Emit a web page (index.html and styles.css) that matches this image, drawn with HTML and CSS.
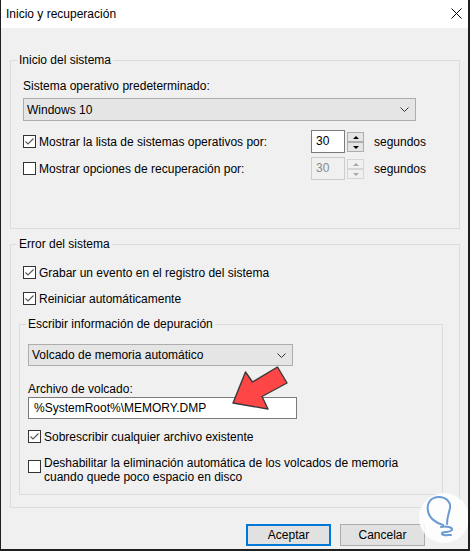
FILE: index.html
```html
<!DOCTYPE html>
<html lang="es">
<head>
<meta charset="utf-8">
<title>Inicio y recuperación</title>
<link rel="stylesheet" href="styles.css">
</head>
<body>
<div class="window">
  <div class="titlebar">
    <span class="title">Inicio y recuperación</span>
    <svg class="close" width="11" height="11" viewBox="0 0 11 11"><path d="M0.5 0.5L10.5 10.5M10.5 0.5L0.5 10.5" stroke="#000" stroke-width="1" fill="none"/></svg>
  </div>
  <div class="content">
    <fieldset class="group g1">
      <legend class="lg-outer">Inicio del sistema</legend>
      <div class="label">Sistema operativo predeterminado:</div>
      <div class="combo combo-os"><span>Windows 10</span><svg class="chev" width="9" height="5" viewBox="0 0 9 5"><path d="M0.5 0.5L4.5 4.5L8.5 0.5" stroke="#333" fill="none"/></svg></div>
      <div class="row row-first">
        <div class="check-label"><span class="cb"><svg width="11" height="11" viewBox="0 0 11 11"><path d="M1.5 5.5L4 8L9.5 2.5" fill="none" stroke="#555" stroke-width="1.1"/></svg></span><span>Mostrar la lista de sistemas operativos por:</span></div>
        <div class="spinner">
          <div class="spin-text">30</div>
          <div class="spin-btns"><span class="spin-btn up"></span><span class="spin-btn down"></span></div>
        </div>
        <span class="unit">segundos</span>
      </div>
      <div class="row row-second">
        <div class="check-label"><span class="cb"></span><span>Mostrar opciones de recuperación por:</span></div>
        <div class="spinner disabled">
          <div class="spin-text">30</div>
          <div class="spin-btns"><span class="spin-btn up"></span><span class="spin-btn down"></span></div>
        </div>
        <span class="unit">segundos</span>
      </div>
    </fieldset>

    <fieldset class="group g2">
      <legend class="lg-outer">Error del sistema</legend>
      <div class="crow crow-first"><span class="cb"><svg width="11" height="11" viewBox="0 0 11 11"><path d="M1.5 5.5L4 8L9.5 2.5" fill="none" stroke="#555" stroke-width="1.1"/></svg></span><span>Grabar un evento en el registro del sistema</span></div>
      <div class="crow crow-next"><span class="cb"><svg width="11" height="11" viewBox="0 0 11 11"><path d="M1.5 5.5L4 8L9.5 2.5" fill="none" stroke="#555" stroke-width="1.1"/></svg></span><span>Reiniciar automáticamente</span></div>

      <fieldset class="group inner">
        <legend class="lg-inner">Escribir información de depuración</legend>
        <div class="combo combo-dump"><span>Volcado de memoria automático</span><svg class="chev" width="9" height="5" viewBox="0 0 9 5"><path d="M0.5 0.5L4.5 4.5L8.5 0.5" stroke="#333" fill="none"/></svg></div>
        <div class="label label-file">Archivo de volcado:</div>
        <div class="textbox">%SystemRoot%\MEMORY.DMP</div>
        <div class="crow crow-over"><span class="cb"><svg width="11" height="11" viewBox="0 0 11 11"><path d="M1.5 5.5L4 8L9.5 2.5" fill="none" stroke="#555" stroke-width="1.1"/></svg></span><span>Sobrescribir cualquier archivo existente</span></div>
        <div class="crow-multi"><span class="cb cb-top"></span><span class="multi-text">Deshabilitar la eliminación automática de los volcados de memoria<br>cuando quede poco espacio en disco</span></div>
      </fieldset>
    </fieldset>

    <div class="buttons">
      <button class="btn btn-default" type="button">Aceptar</button>
      <button class="btn" type="button">Cancelar</button>
    </div>
  </div>

  <svg class="overlay" width="470" height="551" viewBox="0 0 470 551">
    <polygon points="233,403 245.5,372 252.5,382 277.5,367 287,383 262,396.5 268,409" fill="#ff4646" stroke="#3a3a3a" stroke-width="1.4" stroke-linejoin="round"/>
    <circle cx="444" cy="518" r="25" fill="#ffffff" fill-opacity="0.85"/>
    <path d="M443 525 C436 523 429 518 428 511 C426 502 432 497 439 497 C446 497 451 502 450 508 C449 513 447 517 447 524 M441 527 C446 526 453 527 452 530 C450 533 441 531 442 534 C443 536 448 535 451 535" fill="none" stroke="#6b9bd2" stroke-width="2" stroke-linecap="round"/>
  </svg>
</div>
</body>
</html>
```

FILE: styles.css
```css
html, body {
  margin: 0;
  padding: 0;
  background: #f0f0f0;
}

.window {
  position: relative;
  width: 470px;
  height: 551px;
  box-sizing: border-box;
  border-left: 1px solid #1f1f1f;
  border-right: 2px solid #1f1f1f;
  border-bottom: 2px solid #1f1f1f;
  background: #f0f0f0;
  font: 12px "Liberation Sans", Arial, sans-serif;
  color: #000;
  overflow: hidden;
}

.titlebar {
  height: 28px;
  background: #fff;
  display: flex;
  align-items: center;
  justify-content: space-between;
  padding: 0 6px 0 5px;
  box-sizing: border-box;
}

.close {
  display: block;
  margin-top: -1px;
}

.content {
  padding: 24px 8px 0 9px;
}

.group {
  margin: 0;
  border: 1px solid #dcdcdc;
  min-width: 0;
}

.group legend {
  padding: 0 2px;
  line-height: 16px;
}

.lg-outer {
  margin-left: -6px;
}

.lg-inner {
  margin-left: -2px;
}

.g1 {
  padding: 10px 8px 48px 12px;
}

.g2 {
  margin-top: 7px;
  padding: 12px 8px 12px 12px;
}

.inner {
  width: 424px;
  box-sizing: border-box;
  margin: 9px 0 0 -4px;
  padding: 12px 8px 10px 8px;
}

.label {
  line-height: 16px;
}

.combo {
  display: flex;
  align-items: center;
  justify-content: space-between;
  box-sizing: border-box;
  border: 1px solid #adadad;
  background: #e5e5e5;
  padding: 0 6px 0 3px;
}

.combo-os {
  margin-top: 4px;
  width: 393px;
  height: 23px;
}

.combo-dump {
  width: 265px;
  height: 22px;
}

.chev {
  display: block;
}

.row {
  display: flex;
  align-items: center;
  height: 23px;
}

.row-first {
  margin-top: 9px;
}

.row-second {
  margin-top: 4px;
}

.check-label {
  width: 288px;
  display: flex;
  align-items: center;
  gap: 3px;
}

.cb {
  flex: none;
  width: 13px;
  height: 13px;
  box-sizing: border-box;
  border: 1px solid #333;
  background: #fff;
  display: flex;
}

.cb svg {
  display: block;
}

.spinner {
  display: flex;
  align-items: flex-start;
  gap: 2px;
  height: 23px;
}

.spin-text {
  width: 34px;
  height: 23px;
  box-sizing: border-box;
  border: 1px solid #7a7a7a;
  background: #fff;
  padding-left: 4px;
  line-height: 21px;
}

.spin-btns {
  display: flex;
  flex-direction: column;
  margin-top: 2px;
}

.spin-btn {
  width: 17px;
  height: 10px;
  box-sizing: border-box;
  border: 1px solid #adadad;
  background: #e5e5e5;
  display: flex;
  align-items: center;
  justify-content: center;
}

.spin-btn.up::after {
  content: "";
  border-left: 3px solid transparent;
  border-right: 3px solid transparent;
  border-bottom: 3px solid #000;
}

.spin-btn.down::after {
  content: "";
  border-left: 3px solid transparent;
  border-right: 3px solid transparent;
  border-top: 3px solid #000;
}

.spinner.disabled .spin-text {
  border-color: #cccccc;
  background: #f0f0f0;
  color: #8a8a8a;
}

.spinner.disabled .spin-btn {
  border-color: #d5d5d5;
  background: #f0f0f0;
}

.spinner.disabled .spin-btn.up::after {
  border-bottom-color: #a8a8a8;
}

.spinner.disabled .spin-btn.down::after {
  border-top-color: #a8a8a8;
}

.unit {
  margin-left: 10px;
}

.crow {
  display: flex;
  align-items: center;
  gap: 3px;
  height: 17px;
}

.crow-next {
  margin-top: 9px;
}

.label-file {
  margin-top: 16px;
  line-height: 15px;
}

.textbox {
  width: 269px;
  height: 22px;
  box-sizing: border-box;
  border: 1px solid #7a7a7a;
  background: #fff;
  padding-left: 5px;
  line-height: 20px;
}

.crow-over {
  margin-top: 9px;
}

.crow-multi {
  display: flex;
  align-items: flex-start;
  gap: 3px;
  margin-top: 12px;
}

.cb-top {
  margin-top: 3px;
}

.multi-text {
  line-height: 13.5px;
}

.buttons {
  display: flex;
  justify-content: flex-end;
  gap: 9px;
  margin-top: 16px;
  padding-right: 35px;
}

.btn {
  width: 85px;
  height: 22px;
  box-sizing: border-box;
  border: 1px solid #adadad;
  background: #e1e1e1;
  font: inherit;
  color: #000;
  padding: 0;
  margin: 0;
}

.btn-default {
  border: 2px solid #0078d7;
}

.overlay {
  position: absolute;
  left: -1px;
  top: 0;
  pointer-events: none;
}
```
